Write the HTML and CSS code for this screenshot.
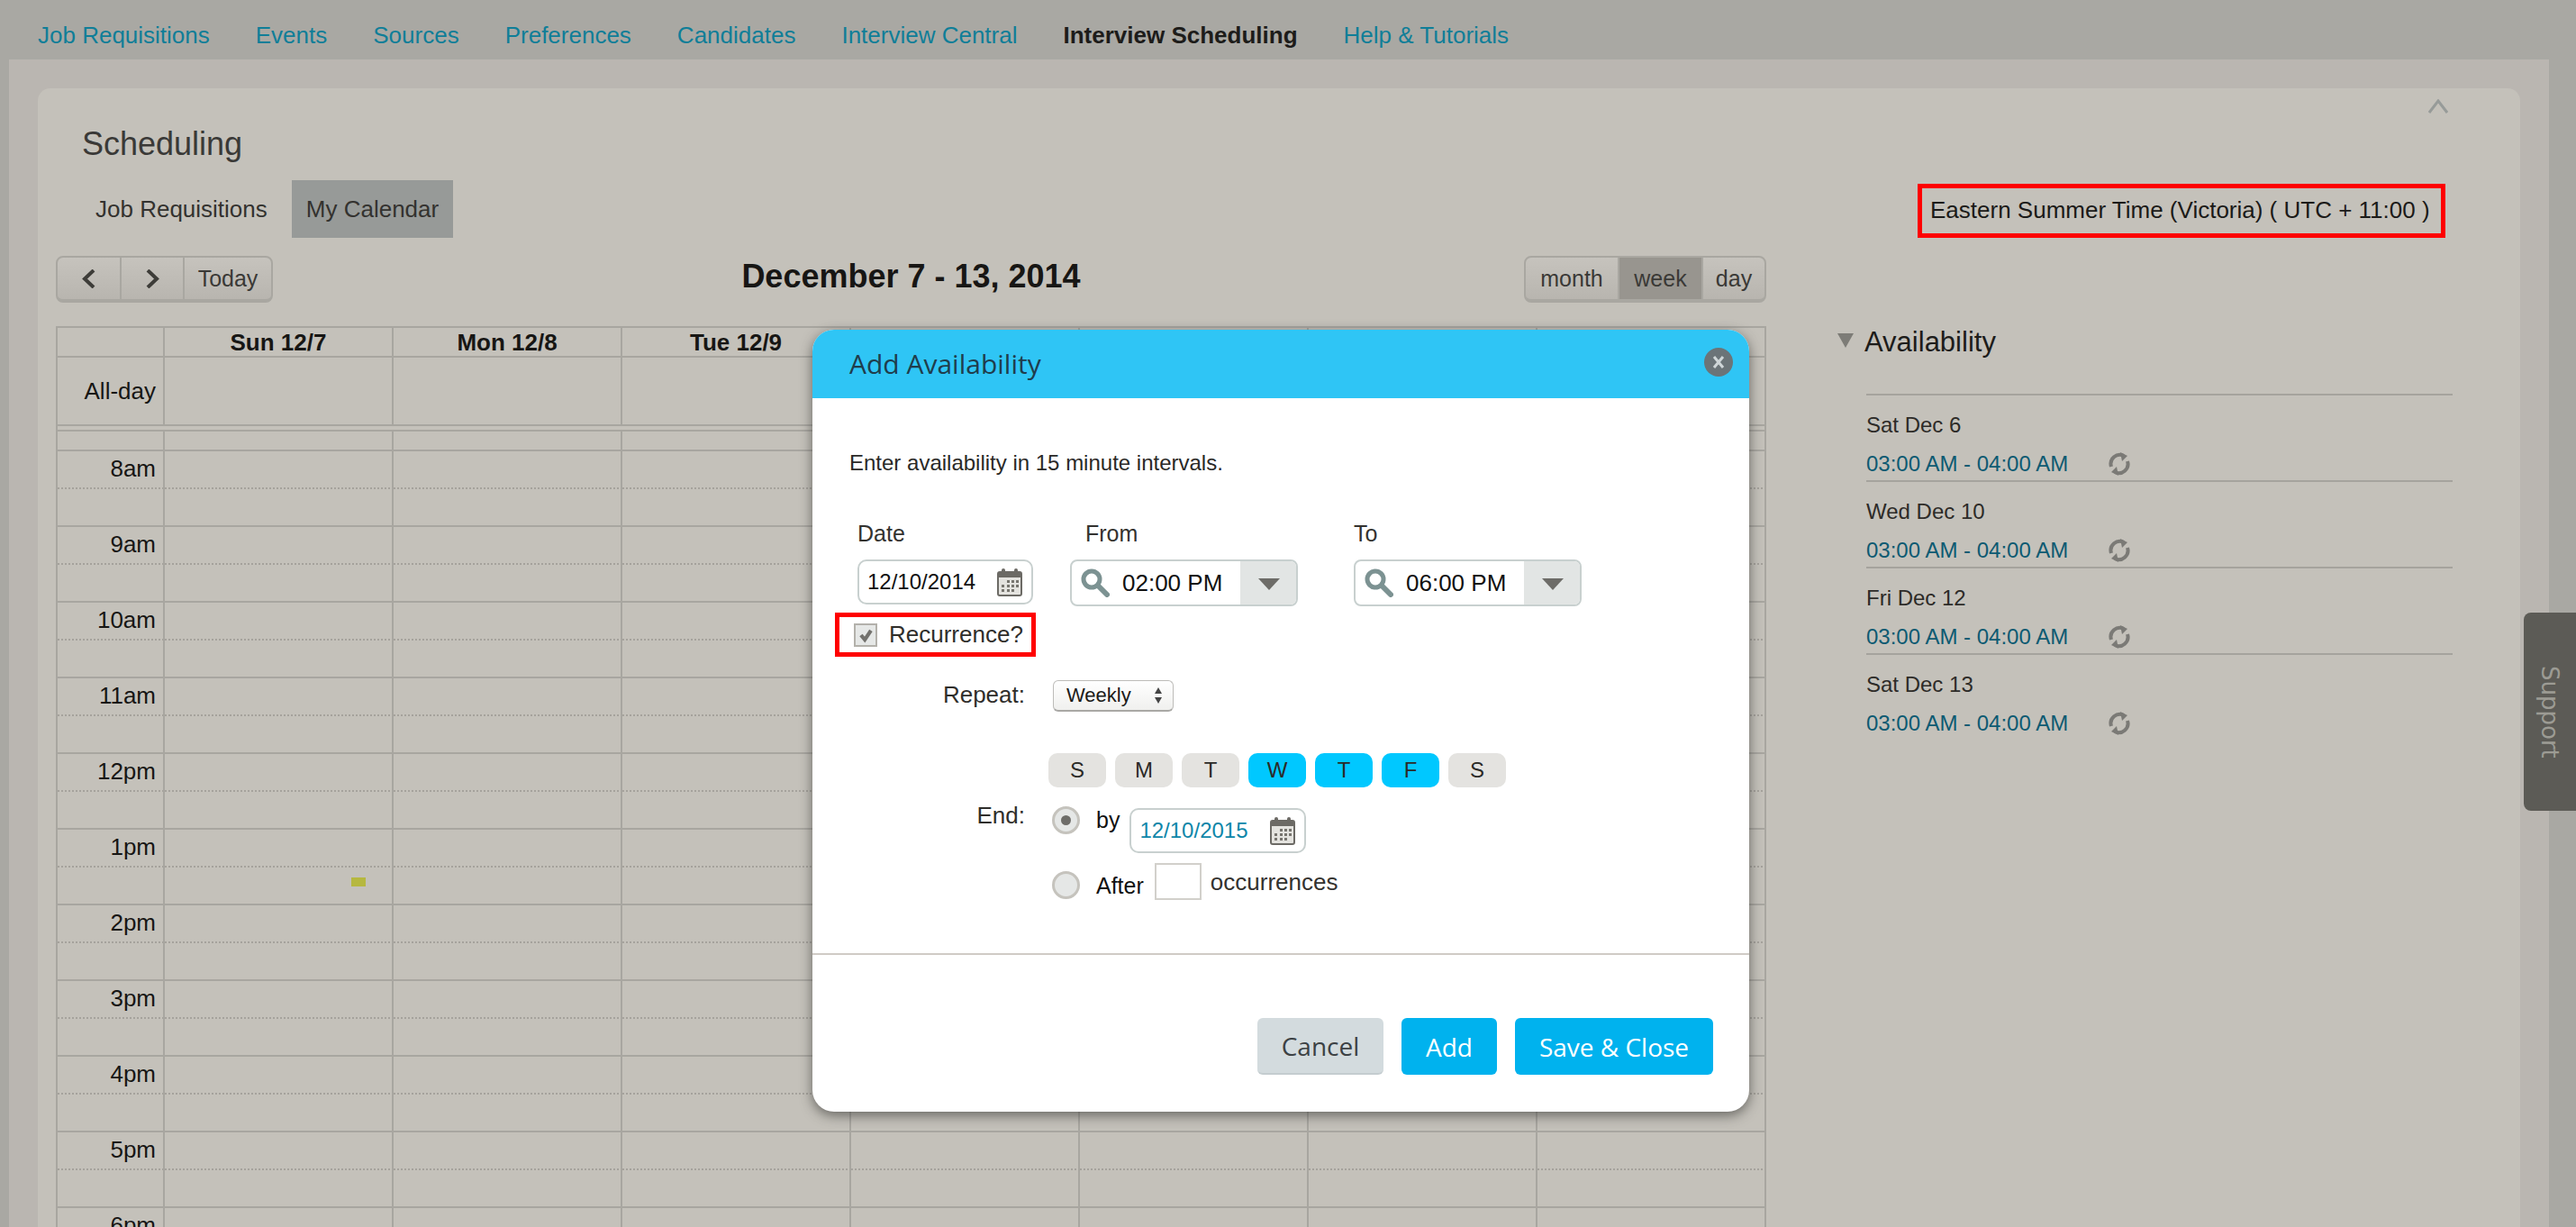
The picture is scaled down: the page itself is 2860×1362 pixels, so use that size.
FILE: index.html
```html
<!DOCTYPE html>
<html lang="en">

<head>
    <meta charset="UTF-8">
    <title>Scheduling</title>
    <link rel="stylesheet" href="styles.css">
</head>

<body>
    <svg class="sprite" xmlns="http://www.w3.org/2000/svg">
        <symbol id="icon-cal" viewBox="0 0 28 32">
            <rect x="1" y="5" width="26" height="26" rx="2" fill="#e4e3df" stroke="#6c6a65" stroke-width="2"/>
            <rect x="1" y="5" width="26" height="6" fill="#6c6a65"/>
            <rect x="5" y="1" width="4" height="7" rx="2" fill="#6c6a65"/>
            <rect x="19" y="1" width="4" height="7" rx="2" fill="#6c6a65"/>
            <path d="M11 14h3v3h-3zM16 14h3v3h-3zM21 14h3v3h-3zM5 19h3v3H5zM11 19h3v3h-3zM16 19h3v3h-3zM21 19h3v3h-3zM5 24h3v3H5zM11 24h3v3h-3zM16 24h3v3h-3z" fill="#77756f"/>
        </symbol>
        <symbol id="icon-search" viewBox="0 0 32 32">
            <circle cx="12" cy="12" r="9" fill="none" stroke="#7c9292" stroke-width="5"/>
            <path d="M19 19l10 10" stroke="#7c9292" stroke-width="6" stroke-linecap="round"/>
        </symbol>
        <symbol id="icon-repeat" viewBox="0 0 28 28">
            <path d="M5 17a10 10 0 0 1 14-12" fill="none" stroke="#7b7a76" stroke-width="4"/>
            <path d="M23 11a10 10 0 0 1-14 12" fill="none" stroke="#7b7a76" stroke-width="4"/>
            <path d="M15 1l8 4-6 6zM13 27l-8-4 6-6z" fill="#7b7a76"/>
        </symbol>
    </svg>

    <nav class="topnav">
        <a href="#">Job Requisitions</a>
        <a href="#">Events</a>
        <a href="#">Sources</a>
        <a href="#">Preferences</a>
        <a href="#">Candidates</a>
        <a href="#">Interview Central</a>
        <a href="#" class="active">Interview Scheduling</a>
        <a href="#">Help &amp; Tutorials</a>
    </nav>

    <div class="panel">
        <div class="card">
            <svg class="collapse" viewBox="0 0 22 16"><path d="M1 15L11 2l10 13" fill="none" stroke="#979b99" stroke-width="3"/></svg>
            <h1 class="page-title">Scheduling</h1>

            <div class="tabbar">
                <div class="tabs">
                    <a href="#" class="tab">Job Requisitions</a>
                    <a href="#" class="tab active">My Calendar</a>
                </div>
                <div class="timezone">Eastern Summer Time (Victoria) ( UTC + 11:00 )</div>
            </div>

            <div class="main">
                <div class="calendar">
                    <div class="toolbar">
                        <div class="btn-group">
                            <button class="nav-btn"><svg viewBox="0 0 15 21" class="chev"><path d="M13 1L3 10.500l10 9.500" fill="none" stroke="#3e3d39" stroke-width="4"/></svg></button>
                            <button class="nav-btn"><svg viewBox="0 0 15 21" class="chev"><path d="M2 1l10 9.500L2 20" fill="none" stroke="#3e3d39" stroke-width="4"/></svg></button>
                            <button class="today-btn">Today</button>
                        </div>
                        <h2 class="range">December 7 - 13, 2014</h2>
                        <div class="btn-group">
                            <button class="view-month">month</button>
                            <button class="view-week active">week</button>
                            <button class="view-day">day</button>
                        </div>
                    </div>

                    <table class="week">
                        <colgroup>
                            <col class="axis-col">
                        </colgroup>
                        <tr class="head">
                            <th></th><th>Sun 12/7</th><th>Mon 12/8</th><th>Tue 12/9</th><th></th><th></th><th></th><th></th>
                        </tr>
                        <tr class="allday">
                            <td class="axis">All-day</td><td></td><td></td><td></td><td></td><td></td><td></td><td></td>
                        </tr>
                        <tr class="band">
                            <td colspan="8"></td>
                        </tr>
                        <tr class="stub">
                            <td></td><td></td><td></td><td></td><td></td><td></td><td></td><td></td>
                        </tr>
                        <tr class="hour"><td class="axis">8am</td><td></td><td></td><td></td><td></td><td></td><td></td><td></td></tr>
                        <tr class="hour"><td class="axis">9am</td><td></td><td></td><td></td><td></td><td></td><td></td><td></td></tr>
                        <tr class="hour"><td class="axis">10am</td><td></td><td></td><td></td><td></td><td></td><td></td><td></td></tr>
                        <tr class="hour"><td class="axis">11am</td><td></td><td></td><td></td><td></td><td></td><td></td><td></td></tr>
                        <tr class="hour"><td class="axis">12pm</td><td></td><td></td><td></td><td></td><td></td><td></td><td></td></tr>
                        <tr class="hour"><td class="axis">1pm</td><td class="has-slot"><span class="slot"></span></td><td></td><td></td><td></td><td></td><td></td><td></td></tr>
                        <tr class="hour"><td class="axis">2pm</td><td></td><td></td><td></td><td></td><td></td><td></td><td></td></tr>
                        <tr class="hour"><td class="axis">3pm</td><td></td><td></td><td></td><td></td><td></td><td></td><td></td></tr>
                        <tr class="hour"><td class="axis">4pm</td><td></td><td></td><td></td><td></td><td></td><td></td><td></td></tr>
                        <tr class="hour"><td class="axis">5pm</td><td></td><td></td><td></td><td></td><td></td><td></td><td></td></tr>
                        <tr class="hour"><td class="axis">6pm</td><td></td><td></td><td></td><td></td><td></td><td></td><td></td></tr>
                    </table>
                </div>

                <aside class="side">
                    <h3 class="side-title"><span class="side-arrow"></span>Availability</h3>
                    <div class="side-list">
                        <div class="side-item">
                            <div class="side-date">Sat Dec 6</div>
                            <div class="side-time"><a href="#">03:00 AM - 04:00 AM</a><svg class="repeat"><use href="#icon-repeat"/></svg></div>
                        </div>
                        <div class="side-item">
                            <div class="side-date">Wed Dec 10</div>
                            <div class="side-time"><a href="#">03:00 AM - 04:00 AM</a><svg class="repeat"><use href="#icon-repeat"/></svg></div>
                        </div>
                        <div class="side-item">
                            <div class="side-date">Fri Dec 12</div>
                            <div class="side-time"><a href="#">03:00 AM - 04:00 AM</a><svg class="repeat"><use href="#icon-repeat"/></svg></div>
                        </div>
                        <div class="side-item last">
                            <div class="side-date">Sat Dec 13</div>
                            <div class="side-time"><a href="#">03:00 AM - 04:00 AM</a><svg class="repeat"><use href="#icon-repeat"/></svg></div>
                        </div>
                    </div>
                </aside>
            </div>
        </div>
    </div>

    <div class="support">Support</div>

    <div class="modal">
        <div class="modal-head">
            <span>Add Availability</span>
            <svg class="modal-close" viewBox="0 0 32 32">
                <circle cx="16" cy="16" r="16" fill="#6b7478"/>
                <path d="M11 10l10 12M21 10L11 22" stroke="#cfd6d8" stroke-width="3"/>
            </svg>
        </div>
        <div class="modal-body">
            <p class="intro">Enter availability in 15 minute intervals.</p>

            <div class="fields">
                <div class="field field-date">
                    <label>Date</label>
                    <div class="date-box"><span>12/10/2014</span><svg class="cal"><use href="#icon-cal"/></svg></div>
                </div>
                <div class="field field-from">
                    <label>From</label>
                    <div class="combo">
                        <svg class="search"><use href="#icon-search"/></svg>
                        <span class="combo-value">02:00 PM</span>
                        <span class="combo-arrow"></span>
                    </div>
                </div>
                <div class="field field-to">
                    <label>To</label>
                    <div class="combo">
                        <svg class="search"><use href="#icon-search"/></svg>
                        <span class="combo-value">06:00 PM</span>
                        <span class="combo-arrow"></span>
                    </div>
                </div>
            </div>

            <div class="recurrence">
                <span class="check">
                    <svg viewBox="0 0 26 26"><path d="M7 13l5 6 8-12" fill="none" stroke="#73726e" stroke-width="5"/></svg>
                </span>
                <span>Recurrence?</span>
            </div>

            <div class="row row-repeat">
                <div class="row-label">Repeat:</div>
                <div class="fake-select">
                    <span>Weekly</span>
                    <span class="updown"></span>
                </div>
            </div>

            <div class="row row-days">
                <div class="row-label"></div>
                <div class="days">
                    <span class="day">S</span>
                    <span class="day">M</span>
                    <span class="day">T</span>
                    <span class="day on">W</span>
                    <span class="day on">T</span>
                    <span class="day on">F</span>
                    <span class="day">S</span>
                </div>
            </div>

            <div class="row row-end">
                <div class="row-label">End:</div>
                <div class="end-options">
                    <div class="end-by">
                        <span class="radio checked"></span>
                        <span class="by-text">by</span>
                        <div class="date-box date-box-link"><span>12/10/2015</span><svg class="cal"><use href="#icon-cal"/></svg></div>
                    </div>
                    <div class="end-after">
                        <span class="radio"></span>
                        <span class="after-text">After</span>
                        <span class="count"></span>
                        <span class="occ-text">occurrences</span>
                    </div>
                </div>
            </div>
        </div>
        <div class="modal-foot">
            <button class="btn btn-cancel">Cancel</button>
            <button class="btn btn-primary">Add</button>
            <button class="btn btn-primary">Save &amp; Close</button>
        </div>
    </div>
</body>

</html>
```

FILE: styles.css
```css
html,
body {
    height: 100%;
}

body {
    margin: 0;
    overflow: hidden;
    background-color: #a9a8a3;
    font-family: "Liberation Sans", Arial, sans-serif;
    font-size: 24px;
    color: #2b2a27;
}

a {
    text-decoration: none;
}

button {
    font-family: inherit;
    margin: 0;
}

.sprite {
    display: none;
}

/* top navigation */
.topnav {
    display: flex;
    height: 66px;
    align-items: center;
    padding-left: 42px;
    padding-top: 12px;
    box-sizing: border-box;
    gap: 51px;
    font-size: 26px;
}

.topnav a {
    color: #0f7e98;
}

.topnav a.active {
    color: #1d1c1a;
    font-weight: bold;
}

/* page */
.panel {
    width: 2820px;
    height: 1296px;
    margin-left: 10px;
    padding: 32px 32px 0;
    box-sizing: border-box;
    background-color: #bab6b1;
}

.card {
    position: relative;
    height: 1400px;
    background-color: #c4c1ba;
    border-radius: 14px 14px 0 0;
}

.collapse {
    position: absolute;
    top: 12px;
    right: 80px;
    width: 22px;
    height: 16px;
}

.page-title {
    margin: 0;
    padding: 40px 0 18px 49px;
    font-size: 36px;
    line-height: 44px;
    font-weight: normal;
    color: #3a3937;
}

.tabbar {
    display: flex;
    justify-content: space-between;
    align-items: flex-end;
    padding: 0 83px 0 48px;
}

.tabs {
    display: flex;
    gap: 11px;
}

.tab {
    padding: 0 16px;
    line-height: 64px;
    font-size: 26px;
    color: #33322f;
}

.tab.active {
    background-color: #979a98;
}

.timezone {
    width: 586px;
    height: 60px;
    box-sizing: border-box;
    padding-left: 9px;
    border: 5px solid #ff0000;
    font-size: 26px;
    line-height: 48px;
    color: #1b1a18;
    white-space: nowrap;
}

.main {
    display: flex;
    padding: 20px 0 0 20px;
    gap: 79px;
}

/* calendar */
.calendar {
    width: 1899px;
}

.toolbar {
    display: grid;
    grid-template-columns: 1fr auto 1fr;
    align-items: center;
    height: 52px;
    margin-bottom: 26px;
}

.toolbar .btn-group:last-child {
    justify-self: end;
}

.toolbar .btn-group:first-child {
    justify-self: start;
}

.range {
    margin: 0 0 6px;
    font-size: 36px;
    font-weight: bold;
    color: #171614;
}

.btn-group {
    display: flex;
    height: 52px;
    box-sizing: border-box;
    border: 2px solid #a9a7a1;
    border-bottom-width: 4px;
    border-radius: 8px;
    background: linear-gradient(#c6c3bd, #b8b5af);
    overflow: hidden;
}

.btn-group button {
    height: 100%;
    padding: 0;
    border: 0;
    border-left: 2px solid #a9a7a1;
    background: none;
    font-size: 25px;
    color: #3a3936;
}

.btn-group button:first-child {
    border-left: 0;
}

.nav-btn {
    width: 70px;
}

.nav-btn:first-child {
    width: 69px;
}

.chev {
    width: 15px;
    height: 21px;
    margin-top: 6px;
}

.today-btn {
    width: 98px;
}

.view-month {
    width: 102px;
}

.view-week {
    width: 93px;
}

.view-day {
    width: 70px;
}

.btn-group button.active {
    background-color: #98958f;
}

.week {
    width: 1899px;
    table-layout: fixed;
    border-collapse: collapse;
}

.axis-col {
    width: 119px;
}

.week th,
.week td {
    padding: 0;
    border: 2px solid #a8a6a0;
}

.week th {
    font-size: 26px;
    color: #171614;
}

.head th {
    height: 31px;
    line-height: 30px;
}

.allday td {
    height: 74px;
}

.band td {
    height: 4px;
}

.stub td {
    height: 20px;
}

.week .axis {
    padding-right: 8px;
    text-align: right;
    font-size: 26px;
    color: #171614;
}

.hour td {
    height: 84px;
    box-sizing: border-box;
    background-image: repeating-linear-gradient(to right, #a5a29c 0 2px, transparent 2px 4px);
    background-size: 100% 2px;
    background-position: 0 40px;
    background-repeat: no-repeat;
}

.hour .axis {
    vertical-align: top;
    line-height: 38px;
}

.week .has-slot {
    position: relative;
}

.slot {
    position: absolute;
    top: 53px;
    left: 207px;
    width: 16px;
    height: 10px;
    background-color: #b6b840;
}

/* availability list */
.side {
    width: 683px;
    padding-top: 78px;
    box-sizing: border-box;
}

.side-title {
    display: flex;
    align-items: center;
    margin: 0;
    height: 36px;
    font-size: 31px;
    font-weight: normal;
    color: #1d1c1a;
}

.side-arrow {
    width: 0;
    height: 0;
    margin-right: 12px;
    margin-bottom: 4px;
    border-left: 9px solid transparent;
    border-right: 9px solid transparent;
    border-top: 16px solid #7d7c77;
}

.side-list {
    margin: 39px 0 0 32px;
    border-top: 2px solid #a5a39d;
}

.side-item {
    height: 96px;
    box-sizing: border-box;
    padding-top: 18px;
    border-bottom: 2px solid #a5a39d;
}

.side-item.last {
    border-bottom: 0;
}

.side-date {
    line-height: 30px;
    color: #2d2b28;
}

.side-time {
    display: flex;
    align-items: center;
    margin-top: 13px;
    line-height: 30px;
}

.side-time a {
    color: #0d5a72;
}

.repeat {
    width: 28px;
    height: 28px;
    margin-left: 43px;
}

/* support tab */
.support {
    position: absolute;
    top: 680px;
    right: 0;
    width: 58px;
    height: 220px;
    display: flex;
    align-items: center;
    justify-content: center;
    box-sizing: border-box;
    background-color: #5c5b56;
    border-radius: 8px 0 0 8px;
    writing-mode: vertical-rl;
    font-family: "DejaVu Sans", sans-serif;
    font-size: 26px;
    color: #9c9b94;
}

/* dialog */
.modal {
    position: absolute;
    top: 366px;
    left: 902px;
    width: 1040px;
    height: 868px;
    background-color: #fff;
    border-radius: 24px;
    box-shadow: 0 4px 14px rgba(50, 50, 48, .65);
}

.modal-head {
    display: flex;
    justify-content: space-between;
    height: 76px;
    box-sizing: border-box;
    padding: 0 18px 0 41px;
    background-color: #2fc5f5;
    border-radius: 24px 24px 0 0;
    font-family: "Open Sans", sans-serif;
    font-size: 30px;
    line-height: 76px;
    color: #1f3d4c;
}

.modal-close {
    width: 32px;
    height: 32px;
    margin-top: 20px;
}

.modal-body {
    height: 618px;
    box-sizing: border-box;
    padding-top: 57px;
    border-bottom: 2px solid #d0cbc6;
}

.intro {
    margin: 0 0 48px 41px;
    line-height: 30px;
    font-size: 24px;
    color: #2a2927;
}

.fields {
    display: flex;
    padding-left: 50px;
}

.field label {
    display: block;
    margin-bottom: 14px;
    line-height: 30px;
    font-size: 25px;
    color: #33322f;
}

.field-date {
    width: 236px;
}

.field-from {
    width: 315px;
}

.field-from label {
    padding-left: 17px;
}

.date-box {
    display: flex;
    justify-content: space-between;
    align-items: center;
    width: 195px;
    height: 50px;
    box-sizing: border-box;
    padding: 0 10px 0 9px;
    border: 2px solid #c8d0cf;
    border-radius: 10px;
    color: #111;
}

.date-box-link {
    width: 196px;
    color: #0d86a9;
}

.cal {
    width: 28px;
    height: 32px;
}

.combo {
    display: flex;
    align-items: center;
    width: 253px;
    height: 52px;
    margin-top: 1px;
    box-sizing: border-box;
    border: 2px solid #c8d0cf;
    border-radius: 8px;
    overflow: hidden;
    font-size: 26px;
    color: #111;
}

.search {
    width: 32px;
    height: 32px;
    margin: 0 14px 0 10px;
}

.combo-value {
    flex: 1;
}

.combo-arrow {
    position: relative;
    width: 62px;
    height: 100%;
    background-color: #e2e5e4;
}

.combo-arrow::after {
    content: "";
    position: absolute;
    top: 19px;
    left: 20px;
    border-left: 12px solid transparent;
    border-right: 12px solid transparent;
    border-top: 13px solid #6d6c68;
}

.recurrence {
    display: flex;
    align-items: center;
    width: 223px;
    height: 49px;
    box-sizing: border-box;
    margin: 7px 0 0 25px;
    padding-left: 16px;
    gap: 13px;
    border: 5px solid #ff0000;
    font-size: 26px;
    color: #2f2e2b;
}

.check {
    width: 26px;
    height: 26px;
    box-sizing: border-box;
    border: 2px solid #b3b1ab;
    background-color: #e6e8e7;
}

.check svg {
    display: block;
    width: 22px;
    height: 22px;
}

.row {
    display: flex;
}

.row-label {
    width: 236px;
    margin-right: 26px;
    text-align: right;
    font-size: 26px;
    color: #2f2e2b;
}

.row-repeat {
    margin-top: 26px;
    height: 35px;
}

.row-repeat .row-label {
    line-height: 32px;
}

.fake-select {
    display: flex;
    align-items: center;
    justify-content: space-between;
    width: 134px;
    height: 35px;
    margin-left: 5px;
    padding: 0 12px 0 14px;
    box-sizing: border-box;
    border: 1px solid #bdbcb9;
    border-bottom: 2px solid #a9a8a5;
    border-radius: 6px;
    background: linear-gradient(#fff, #f0f0ee);
    font-size: 22px;
    color: #1c1b19;
}

.updown {
    width: 0;
    height: 24px;
    border-left: 4px solid transparent;
    border-right: 4px solid transparent;
    background: none;
    position: relative;
}

.updown::before,
.updown::after {
    content: "";
    position: absolute;
    left: -4px;
    border-left: 4px solid transparent;
    border-right: 4px solid transparent;
}

.updown::before {
    top: 3px;
    border-bottom: 7px solid #444;
}

.updown::after {
    bottom: 3px;
    border-top: 7px solid #444;
}

.row-days {
    margin-top: 46px;
}

.days {
    display: flex;
    gap: 10px;
}

.day {
    width: 64px;
    height: 38px;
    border-radius: 10px;
    background-color: #e4e3e0;
    text-align: center;
    line-height: 37px;
    font-size: 24px;
    color: #2b2a27;
}

.day.on {
    background-color: #00c8ff;
}

.row-end {
    margin-top: 21px;
}

.row-end .row-label {
    line-height: 20px;
}

.end-options {
    padding-left: 4px;
}

.end-by,
.end-after {
    display: flex;
    font-size: 25px;
    color: #111;
}

.radio {
    width: 31px;
    height: 31px;
    box-sizing: border-box;
    border: 3px solid #c5c3bd;
    border-radius: 50%;
    background-color: #e5e7e6;
    position: relative;
}

.radio.checked::after {
    content: "";
    position: absolute;
    top: 7px;
    left: 7px;
    width: 11px;
    height: 11px;
    border-radius: 50%;
    background-color: #6e6d69;
}

.by-text {
    margin: 0 0 0 18px;
    line-height: 30px;
}

.end-by .date-box {
    margin: 2px 0 0 11px;
    font-size: 24px;
}

.end-after {
    margin-top: 11px;
}

.end-after .radio {
    margin-top: 9px;
}

.after-text {
    margin: 10px 0 0 18px;
    line-height: 30px;
}

.count {
    width: 52px;
    height: 41px;
    margin-left: 12px;
    box-sizing: border-box;
    border: 2px solid #d2d0cb;
}

.occ-text {
    margin: 6px 0 0 10px;
    line-height: 30px;
    font-size: 26px;
    color: #33322f;
}

.modal-foot {
    display: flex;
    justify-content: flex-end;
    gap: 20px;
    padding: 70px 40px 0 0;
}

.btn {
    height: 63px;
    padding: 0;
    border: 0;
    border-radius: 6px;
    font-family: "Open Sans", sans-serif;
    font-size: 28px;
    color: #fff;
}

.btn-cancel {
    width: 140px;
    background-color: #d3dbde;
    border-bottom: 2px solid #c4cccf;
    color: #3c4144;
}

.btn-primary {
    width: 106px;
    background-color: #00b2ee;
}

.btn-primary:last-child {
    width: 220px;
}
```
